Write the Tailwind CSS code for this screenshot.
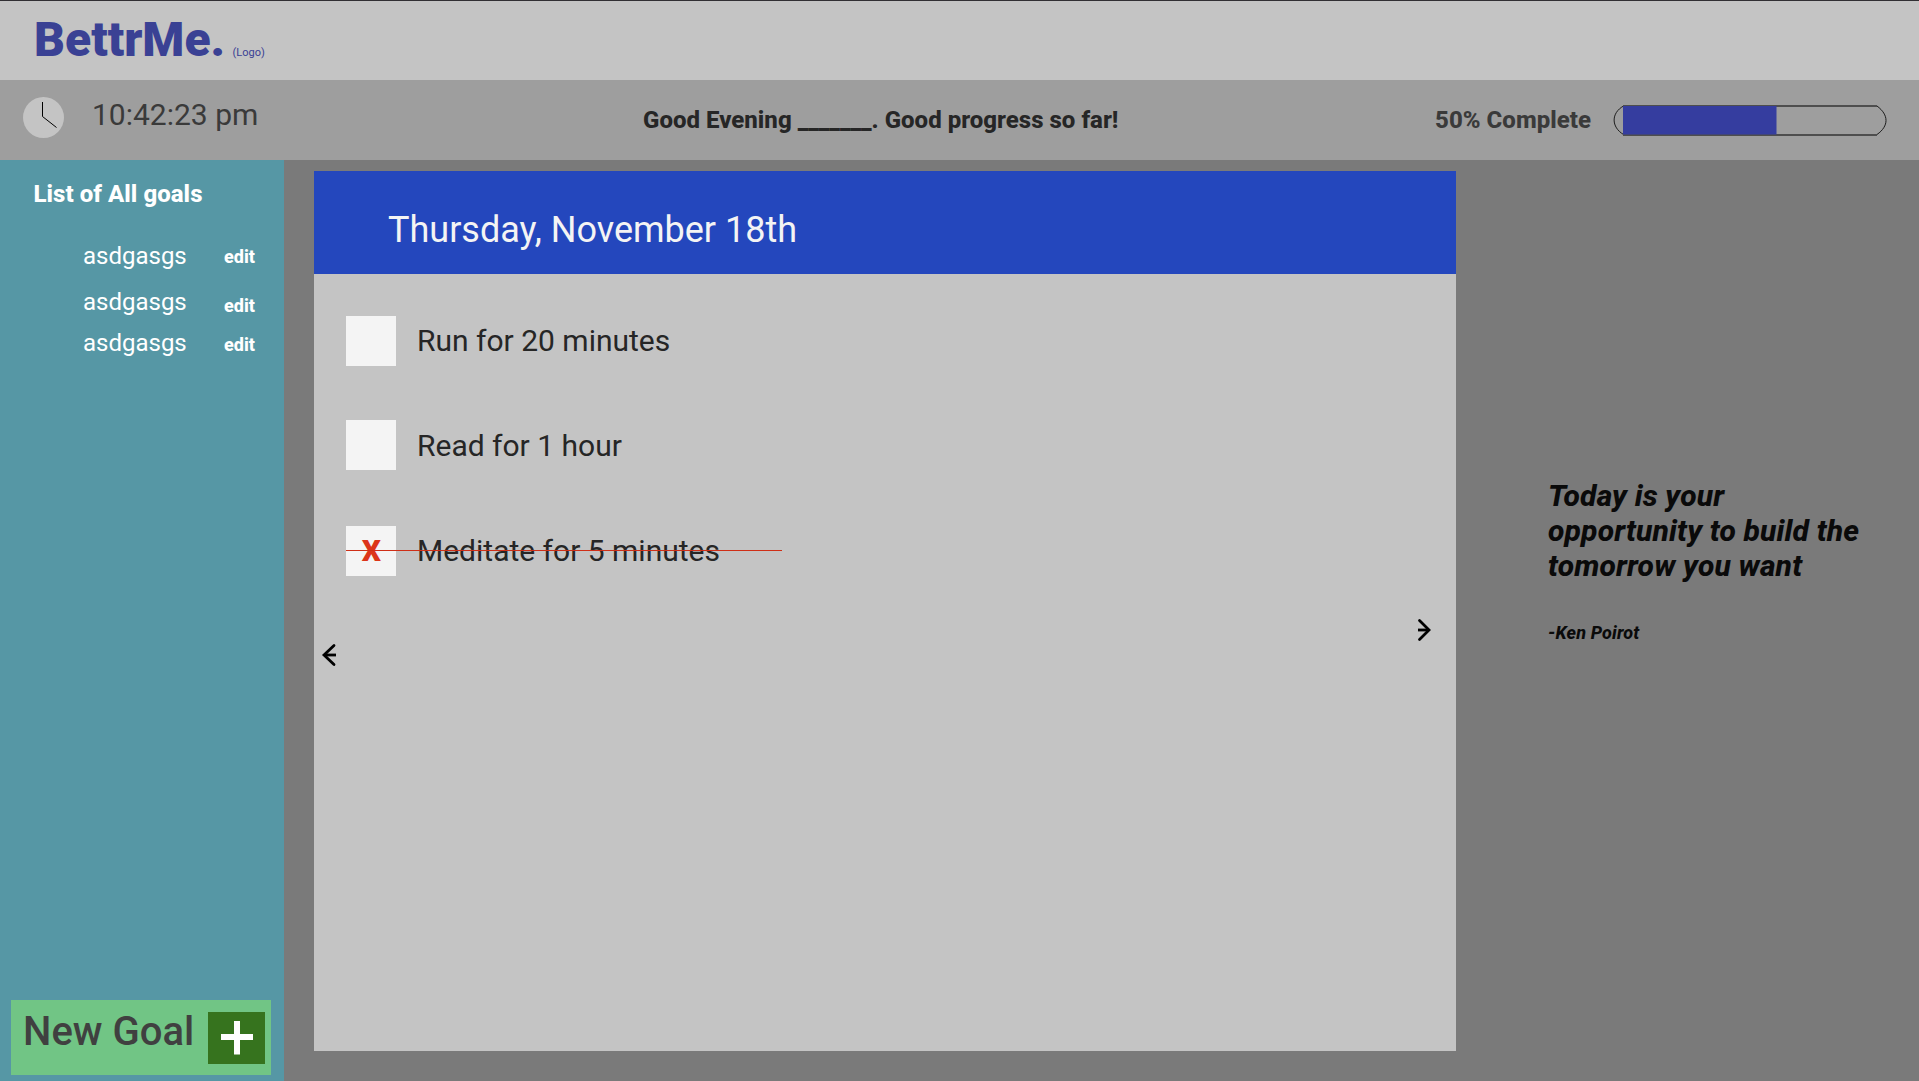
<!DOCTYPE html>
<html lang="en">
<head>
<meta charset="utf-8">
<title>BettrMe.</title>
<script src="https://cdn.jsdelivr.net/npm/@tailwindcss/browser@4"></script>
</head>
<body class="flex h-[1081px] w-[1919px] flex-col overflow-hidden bg-[#7a7a7a] font-['Roboto',sans-serif] whitespace-nowrap">
  <header class="flex h-20 shrink-0 items-start border-t border-[#312f33] bg-[#c4c4c4] pt-[11px] pl-[34px] text-[#3a4194]">
    <h1 class="w-[198.5px] text-[48px] leading-[56px] font-black">BettrMe.</h1>
    <span class="mt-[34px] text-[11px] leading-[14px]">(Logo)</span>
  </header>

  <section class="flex h-20 shrink-0 items-start bg-[#9e9e9e]">
    <svg class="mt-[17px] ml-[23px] h-[41px] w-[41px]" viewBox="0 0 41 41" fill="none">
      <circle cx="20.5" cy="20.5" r="20.5" fill="#c4c4c4"/>
      <path d="M19.5 5v14.5L33.500 30.500" stroke="#000"/>
    </svg>
    <time class="mt-[17px] ml-[28px] w-[551px] text-[30px] leading-[36px] text-[#3a3a3a]">10:42:23 pm</time>
    <p class="mt-[26px] w-[792px] text-[24px] leading-[28px] font-extrabold tracking-[0.02px] text-[#262626]">Good Evening <span class="font-black tracking-[-0.05px]">_______</span>. Good progress so far!</p>
    <p class="mt-[26px] w-[178px] text-[24px] leading-[28px] font-extrabold tracking-[0.04px] text-[#3a3a3a]">50% Complete</p>
    <svg class="mt-[24px] h-[33px] w-[276px]" viewBox="0 0 276 33" fill="none">
      <path d="M10.500 2C-2 9 -2 23 10.500 30.500M264 2C276 11 276 22 264 30.500" stroke="#1c1c1c"/>
      <path d="M10 2H264M10 31H264" stroke="#4e4e4e" stroke-width="2"/>
      <path d="M10 2H163.500V30.500H10Z" fill="#353d9f"/>
    </svg>
  </section>

  <div class="flex min-h-0 flex-1">
    <aside class="flex w-[284px] shrink-0 flex-col bg-[#5697a5] text-white">
      <h2 class="mt-5 ml-[33.5px] text-[24px] leading-[28px] font-extrabold tracking-[0.05px]">List of All goals</h2>
      <ul class="mt-[34px] ml-[83px] text-[24px] leading-[28px]">
        <li class="flex h-[46px] items-start"><span class="w-[141px]">asdgasgs</span><a class="mt-[4px] text-[18px] leading-[21px] font-extrabold">edit</a></li>
        <li class="flex h-[41px] items-start"><span class="w-[141px]">asdgasgs</span><a class="mt-[7px] text-[18px] leading-[21px] font-extrabold">edit</a></li>
        <li class="flex h-[28px] items-start"><span class="w-[141px]">asdgasgs</span><a class="mt-[5px] text-[18px] leading-[21px] font-extrabold">edit</a></li>
      </ul>
      <button class="mt-auto mb-[6px] ml-[11px] flex h-[75px] w-[260px] items-start bg-[#71c585] pl-[12px] text-left text-[#404040]">
        <span class="mt-2 w-[185px] text-[40px] leading-[47px] font-medium">New Goal</span>
        <svg class="mt-3 h-[52px] w-[57px] bg-[#36731e]" viewBox="0 0 57 52"><path d="M26 9h6v13h13v6H32v14.500H26V28H13V22H26Z" fill="#fff"/></svg>
      </button>
    </aside>

    <main class="relative mt-[11px] ml-[30px] h-[880px] w-[1142px] shrink-0 bg-[#c4c4c4]">
      <h2 class="h-[103px] bg-[#2447bd] pt-[38px] pl-[74px] text-[36px] leading-[42px] text-[#f4f4f4]">Thursday, November 18th</h2>
      <ul class="mt-[42px] ml-[32px] text-[30px] leading-[35px] text-[#262626]">
        <li class="flex h-[104px] items-start gap-[21px]"><span class="h-[50px] w-[50px] bg-[#f4f4f4]"></span><span class="mt-[7px]">Run for 20 minutes</span></li>
        <li class="flex h-[106px] items-start gap-[21px]"><span class="h-[50px] w-[50px] bg-[#f4f4f4]"></span><span class="mt-[8px]">Read for 1 hour</span></li>
        <li class="relative flex h-[50px] items-start gap-[21px]"><span class="h-[50px] w-[50px] bg-[#f4f4f4] pt-[7px] pl-[0.5px] text-center font-black text-[#dc3519]">X</span><span class="mt-[7px]">Meditate for 5 minutes</span>
          <span class="absolute top-[24px] left-0 h-px w-[436px] bg-[#cf2f17]"></span></li>
      </ul>
      <svg class="absolute top-[472px] left-[7px] h-6 w-4" viewBox="0 0 16 24" fill="none" stroke="#000" stroke-width="2.800"><path d="M13 2.500L3 12L13 21.500" stroke-linecap="round"/><path d="M3 12H15"/></svg>
      <svg class="absolute top-[447px] left-[1103px] h-6 w-4" viewBox="0 0 16 24" fill="none" stroke="#000" stroke-width="2.800"><path d="M2.500 2.500L12 12L2.500 21.500" stroke-linecap="round"/><path d="M12 12H1"/></svg>
    </main>

    <aside class="mt-[318px] ml-[92px] font-extrabold text-[#0a0a0a] italic">
      <blockquote class="text-[30px] leading-[35px] tracking-[0.16px]">Today is your<br>opportunity to build the<br>tomorrow you want</blockquote>
      <p class="mt-[39px] text-[18px] leading-[21px] tracking-[0.15px]">-Ken Poirot</p>
    </aside>
  </div>
</body>
</html>
